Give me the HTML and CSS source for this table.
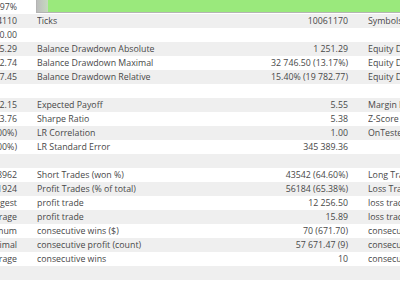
FILE: index.html
```html
<!DOCTYPE html>
<html>
<head>
<meta charset="utf-8">
<link rel="stylesheet" href="styles.css">
</head>
<body>
<div class="report">
  <div class="row">
    <div class="a">97%</div>
    <div class="bar"><div class="bar-empty"></div><div class="bar-fill"></div></div>
  </div>
  <div class="row"><div class="a">4110</div><div class="b">Ticks</div><div class="c">10061170</div><div class="d">Symbols</div></div>
  <div class="row"><div class="a">10000.00</div><div class="b"></div><div class="c"></div><div class="d"></div></div>
  <div class="row"><div class="a">5.29</div><div class="b">Balance Drawdown Absolute</div><div class="c">1 251.29</div><div class="d">Equity Drawdown Absolute</div></div>
  <div class="row"><div class="a">2.74</div><div class="b">Balance Drawdown Maximal</div><div class="c">32 746.50 (13.17%)</div><div class="d">Equity Drawdown Maximal</div></div>
  <div class="row"><div class="a">7.45</div><div class="b">Balance Drawdown Relative</div><div class="c">15.40% (19 782.77)</div><div class="d">Equity Drawdown Relative</div></div>
  <div class="row"><div class="a"></div></div>
  <div class="row"><div class="a">2.15</div><div class="b">Expected Payoff</div><div class="c">5.55</div><div class="d">Margin Level</div></div>
  <div class="row"><div class="a">3.76</div><div class="b">Sharpe Ratio</div><div class="c">5.38</div><div class="d">Z-Score</div></div>
  <div class="row"><div class="a">(0.00%)</div><div class="b">LR Correlation</div><div class="c">1.00</div><div class="d">OnTester result</div></div>
  <div class="row"><div class="a">(0.00%)</div><div class="b">LR Standard Error</div><div class="c">345 389.36</div><div class="d"></div></div>
  <div class="row"><div class="a"></div></div>
  <div class="row"><div class="a">8962</div><div class="b">Short Trades (won %)</div><div class="c">43542 (64.60%)</div><div class="d">Long Trades (won %)</div></div>
  <div class="row"><div class="a">1924</div><div class="b">Profit Trades (% of total)</div><div class="c">56184 (65.38%)</div><div class="d">Loss Trades (% of total)</div></div>
  <div class="row"><div class="a">Largest</div><div class="b">profit trade</div><div class="c">12 256.50</div><div class="d">loss trade</div></div>
  <div class="row"><div class="a">Average</div><div class="b">profit trade</div><div class="c">15.89</div><div class="d">loss trade</div></div>
  <div class="row"><div class="a">Maximum</div><div class="b">consecutive wins ($)</div><div class="c">70 (671.70)</div><div class="d">consecutive losses ($)</div></div>
  <div class="row"><div class="a">Maximal</div><div class="b">consecutive profit (count)</div><div class="c">57 671.47 (9)</div><div class="d">consecutive loss (count)</div></div>
  <div class="row"><div class="a">Average</div><div class="b">consecutive wins</div><div class="c">10</div><div class="d">consecutive losses</div></div>
  <div class="row"><div class="a"></div></div>
  <div class="row"><div class="a"></div></div>
</div>
</body>
</html>
```
FILE: styles.css
```css
html, body {
  margin: 0;
  padding: 0;
  background: #fff;
}
.report {
  width: 400px;
  height: 284px;
  overflow: hidden;
  font-family: "Open Sans", "Noto Sans", sans-serif;
  font-size: 8.8px;
  color: #484848;
}
.row {
  display: grid;
  grid-template-columns: 37px 163px 168px 1fr;
  height: 14px;
  line-height: 14px;
  white-space: nowrap;
}
.row:nth-child(even) {
  background: #efefef;
}
.a {
  display: flex;
  justify-content: flex-end;
  overflow: hidden;
  padding-right: 20px;
}
.b {
  overflow: hidden;
}
.c {
  display: flex;
  justify-content: flex-end;
  padding-right: 20px;
  overflow: hidden;
}
.d {
  overflow: hidden;
}
.bar {
  grid-column: 2 / 5;
  margin-left: -1px;
  margin-right: -4px;
  height: 12px;
  border: 1px solid #b4b4b4;
  border-top: none;
  display: flex;
}
.bar-empty {
  width: 11px;
  background: linear-gradient(90deg, #bdbdbd, #c6d9bf);
}
.bar-fill {
  flex: 1;
  background: #9ae97c;
}
```
